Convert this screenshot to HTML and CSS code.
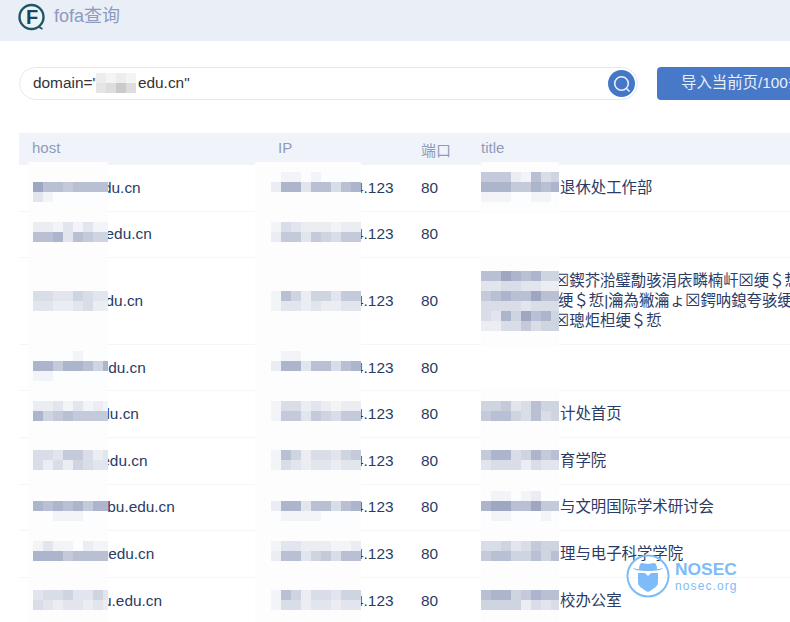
FILE: index.html
```html
<!DOCTYPE html>
<html lang="zh">
<head>
<meta charset="utf-8">
<title>fofa查询</title>
<link rel="stylesheet" href="styles.css">
<script src="mosaic.js" defer></script>
</head>
<body>
<div class="page">
  <header class="topbar">
    <svg class="logo" width="28" height="30" viewBox="0 0 28 30">
      <circle cx="13.5" cy="14" r="12" fill="#eaf3f6" stroke="#1f5566" stroke-width="2.4"/>
      <path d="M21 24l3.5 2" stroke="#1f5566" stroke-width="1.6" fill="none"/>
      <text x="8" y="21" class="logo-f">F</text>
    </svg>
    <span class="brand">fofa查询</span>
  </header>

  <section class="toolbar">
    <div class="search">
      <div class="query">domain="<span class="qmask"><span class="mosaic grey" data-rows="2121,3464"></span></span>edu.cn"</div>
      <button class="lens" type="button" aria-label="search">
        <svg width="20" height="20" viewBox="0 0 20 20"><circle cx="9.5" cy="9.5" r="6.8" fill="none" stroke="#eaf0fa" stroke-width="1.6"/><path d="M14.5 14.5l3 3" stroke="#eaf0fa" stroke-width="1.6"/></svg>
      </button>
    </div>
    <button class="import" type="button">导入当前页/100条</button>
  </section>

  <section class="table">
    <div class="row head">
      <div class="h">host</div><div class="h">IP</div><div class="h cjk">端口</div><div class="h">title</div>
    </div>

    <div class="row">
      <div class="cell">xxxxxxxnndu.cn<span class="mask m-host" data-top="17" data-rows="97767777,31000000"></span></div>
      <div class="cell">222.222.224.123<span class="mask m-ip" data-top="7" data-rows="011010000,288377478"></span></div>
      <div class="cell">80</div>
      <div class="cell ttl">退休处工作部<span class="mask m-title" data-top="7" data-rows="66621745,88866878,11100110"></span></div>
    </div>
    <div class="row">
      <div class="cell">xxxxxxxxx.edu.cn<span class="mask m-host" data-top="10" data-rows="22131311,77837655"></span></div>
      <div class="cell">222.222.224.123<span class="mask m-ip" data-top="10" data-rows="143222122,266365466"></span></div>
      <div class="cell">80</div>
      <div class="cell"></div>
    </div>
    <div class="row">
      <div class="cell">xxxxxxxxx.du.cn<span class="mask m-host" data-top="33" data-rows="44335433,33223422"></span></div>
      <div class="cell">222.222.224.123<span class="mask m-ip" data-top="33" data-rows="175255366,133232233"></span></div>
      <div class="cell">80</div>
      <div class="cell ttl lines"><span class="tofu first">☒</span>鍥芥湁璧勪骇涓庡疄楠屽<span class="tofu">☒</span>绠＄悊<br>绠＄悊|瀹為獙瀹ょ<span class="tofu">☒</span>鍔呐鎴夸骇绠<br><span class="tofu first">☒</span>璁炬柦绠＄悊<span class="mask m-title" data-top="13" data-rows="77987855,33443322,67877977,44443444,43859785,22446455"></span></div>
    </div>
    <div class="row">
      <div class="cell">xxxxxxnn.edu.cn<span class="mask m-host" data-top="6" data-rows="00001000,88688758,11000000"></span></div>
      <div class="cell">222.222.224.123<span class="mask m-ip" data-top="6" data-rows="011000000,288377478"></span></div>
      <div class="cell">80</div>
      <div class="cell"></div>
    </div>
    <div class="row">
      <div class="cell">xxxxxxxxi.du.cn<span class="mask m-host" data-top="10" data-rows="22313121,85676666"></span></div>
      <div class="cell">222.222.224.123<span class="mask m-ip" data-top="10" data-rows="144232122,166365466"></span></div>
      <div class="cell">80</div>
      <div class="cell ttl">计处首页<span class="mask m-title" data-top="10" data-rows="55634755,67754745"></span></div>
    </div>
    <div class="row">
      <div class="cell">xxxxxxxxi.edu.cn<span class="mask m-host" data-top="12" data-rows="44366423,42425433"></span></div>
      <div class="cell">222.222.224.123<span class="mask m-ip" data-top="12" data-rows="175244356,143233233"></span></div>
      <div class="cell">80</div>
      <div class="cell ttl">育学院<span class="mask m-title" data-top="12" data-rows="68845867,34442433"></span></div>
    </div>
    <div class="row">
      <div class="cell">xxxxxxxnn.bu.edu.cn<span class="mask m-host" data-top="16" data-rows="87878688,00111000"></span></div>
      <div class="cell">222.222.224.123<span class="mask m-ip" data-top="16" data-rows="288377478,011110000"></span></div>
      <div class="cell">80</div>
      <div class="cell ttl">与文明国际学术研讨会<span class="mask m-title" data-top="6" data-rows="01101200,89977966,01100010"></span></div>
    </div>
    <div class="row">
      <div class="cell">xxxxxxnnn.edu.cn<span class="mask m-host" data-top="10" data-rows="13110211,88867777"></span></div>
      <div class="cell">222.222.224.123<span class="mask m-ip" data-top="10" data-rows="133222112,277356477"></span></div>
      <div class="cell">80</div>
      <div class="cell ttl">理与电子科学学院<span class="mask m-title" data-top="10" data-rows="44534655,67755757"></span></div>
    </div>
    <div class="row">
      <div class="cell">xxxxxxxnnu.edu.cn<span class="mask m-host" data-top="12" data-rows="34453353,43233232"></span></div>
      <div class="cell">222.222.224.123<span class="mask m-ip" data-top="12" data-rows="175244355,144233233"></span></div>
      <div class="cell">80</div>
      <div class="cell ttl">校办公室<span class="mask m-title" data-top="12" data-rows="78856877,55552434"></span></div>
    </div>
  </section>

  <aside class="watermark">
    <svg width="46" height="46" viewBox="0 0 46 46">
      <circle cx="23" cy="23" r="20.5" fill="none" stroke="#7dbcf9" stroke-width="2"/>
      <path d="M14 16c0-3 1-6 3-6 2 0 4 1 6 1s4-1 6-1c2 0 3 3 3 6 2 0 5-.6 6-1-1 2-5 3-15 3s-14-1-15-3c1 .4 4 1 6 1z" fill="#7dbcf9"/>
      <path d="M13 20h7l3 3 3-3h7v10c0 3-6 7-10 9-4-2-10-6-10-9z" fill="#7dbcf9"/>
    </svg>
    <div class="wm-text">
      <div class="wm-name">NOSEC</div>
      <div class="wm-site">nosec.org</div>
    </div>
  </aside>
</div>
</body>
</html>
```
FILE: styles.css
```css
* { box-sizing: border-box; }
html, body { margin: 0; padding: 0; background: #fff; }
body {
  font-family: "Liberation Sans", "Noto Sans CJK SC", sans-serif;
  font-size: 15.4px;
  color: #2a3b66;
}
.page {
  position: relative;
  width: 790px;
  height: 622px;
  overflow: hidden;
}

.topbar {
  height: 41px;
  background: #e9eef7;
  display: flex;
  align-items: flex-start;
  padding: 3px 0 0 18px;
  gap: 8px;
}
.logo { display: block; }
.logo-f {
  font: bold 20px "Liberation Sans", sans-serif;
  fill: #1d4458;
}
.brand {
  font-size: 18px;
  line-height: 26px;
  color: #8d9bbd;
}

.toolbar {
  display: flex;
  align-items: center;
  gap: 19px;
  padding: 26px 0 0 19px;
  width: 900px;
}
.search {
  width: 619px;
  height: 33px;
  border: 1.5px solid #e3e8f2;
  border-radius: 17px;
  display: flex;
  align-items: center;
  justify-content: space-between;
  padding: 0 2px 0 13px;
}
.query {
  color: #333;
  white-space: nowrap;
  display: flex;
  align-items: center;
  padding-bottom: 2px;
}
.qmask { display: block; width: 43px; height: 20px; margin-left: -2px; margin-right: -1px; overflow: hidden; }
.lens {
  width: 27px;
  height: 27px;
  border: 0;
  padding: 0;
  border-radius: 50%;
  background: #4577c7;
  display: flex;
  align-items: center;
  justify-content: center;
}
.import {
  width: 190px;
  height: 33px;
  border: 0;
  border-radius: 4px;
  background: #4878c8;
  color: #e9effa;
  font: inherit;
  font-size: 15.4px;
  text-align: left;
  padding: 0 0 5px 24px;
}

.table { margin: 33px 0 0 19px; }
.row {
  display: grid;
  grid-template-columns: 259px 143px 60px 1fr;
  border-bottom: 1px solid #f5f6fb;
  line-height: 20px;
}
.head {
  background: #f0f4fa;
  height: 32px;
  border: 0;
  color: #8f9bb8;
  font-size: 15px;
}
.h { padding: 5px 0 0 0; }
.h:first-child, .cell:first-child { padding-left: 13px; }
.h.cjk { padding-top: 8px; }

.cell {
  position: relative;
  display: flex;
  align-items: center;
  padding: 12.8px 0;
  white-space: nowrap;
}
.ttl { padding-left: 79px; }
.lines { display: block; padding-left: 77px; }
.tofu {
  font-family: "DejaVu Sans", sans-serif;
  font-size: 17px;
  line-height: 0;
}
.tofu.first { margin-left: -4px; }

.mask {
  position: absolute;
  top: -3px;
  bottom: -3px;
  overflow: hidden;
  background: #fdfdfe;
}
.m-host { left: 9px; width: 80px; padding-left: 5px; }
.m-ip { left: -23px; width: 106px; padding-left: 16px; }
.m-title { left: 0; width: 78px; }

.mrow { display: flex; height: 10px; }
.mrow i { flex: 0 0 10px; height: 10px; }
.mosaic.grey { display: block; filter: grayscale(1); }

.watermark {
  position: absolute;
  left: 625px;
  top: 553px;
  display: flex;
  align-items: flex-start;
  gap: 4px;
  color: #7dbcf9;
}
.wm-text { padding-top: 7px; }
.wm-name {
  font-size: 17.4px;
  font-weight: bold;
  line-height: 19px;
}
.wm-site {
  font-size: 12px;
  line-height: 12px;
  letter-spacing: 1.1px;
  margin-top: 1px;
}
```
FILE: mosaic.js
```js
var SHADES = ["#fcfdfe", "#f3f4f8", "#ebedf3", "#e2e5ee", "#d9dde8",
              "#cfd4e1", "#c5cadb", "#b9c0d3", "#adb5cc", "#9fa6c1"];
document.querySelectorAll("[data-rows]").forEach(function (el) {
  if (el.dataset.top) el.style.paddingTop = (Number(el.dataset.top) + 3) + "px";
  el.dataset.rows.split(",").forEach(function (row) {
    var line = document.createElement("div");
    line.className = "mrow";
    row.split("").forEach(function (digit) {
      var cell = document.createElement("i");
      cell.style.background = SHADES[Number(digit)];
      line.appendChild(cell);
    });
    el.appendChild(line);
  });
});
```
